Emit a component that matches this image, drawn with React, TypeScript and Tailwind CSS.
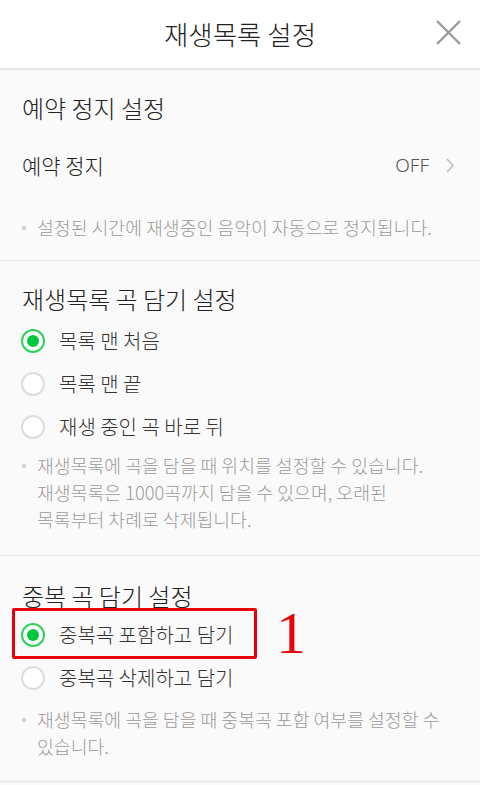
import React from "react";

const FONT = { fontFamily: '"Noto Sans CJK KR", "Noto Sans", sans-serif' };

function Radio({ checked }: { checked: boolean }) {
  return checked ? (
    <span className="flex h-[24px] w-[24px] items-center justify-center rounded-full border-2 border-[#2fd15b] bg-white">
      <span className="h-[12px] w-[12px] rounded-full bg-[#00c73c]" />
    </span>
  ) : (
    <span className="h-[24px] w-[24px] rounded-full border-2 border-[#dddddd] bg-white" />
  );
}

function RadioRow({ checked, label }: { checked: boolean; label: string }) {
  return (
    <div className="flex h-[43px] items-center pl-[21px]">
      <Radio checked={checked} />
      <span className="ml-[14px] text-[20px] font-light leading-[43px] text-[#333333]">{label}</span>
    </div>
  );
}

function Note({ lines }: { lines: string[] }) {
  return (
    <div className="flex pl-[22px] pr-[16px]">
      <span className="mt-[12px] h-[4px] w-[4px] shrink-0 rounded-full bg-[#cccccc]" />
      <div className="ml-[11px] text-[18.3px] font-light leading-[27px] text-[#9a9a9a]">
        {lines.map((l, i) => (
          <div key={i} className="whitespace-nowrap">{l}</div>
        ))}
      </div>
    </div>
  );
}

export default function App() {
  return (
    <div className="flex h-[785px] w-[480px] flex-col overflow-hidden bg-[#fafafa]" style={FONT}>
      <header className="relative flex h-[70px] shrink-0 items-center justify-center border-b-2 border-[#e6e6e6] bg-white">
        <h1 className="text-[26.5px] font-light leading-none text-[#222222]">재생목록 설정</h1>
        <svg className="absolute left-[436px] top-[20px]" width="25" height="25" viewBox="0 0 25 25">
          <path d="M1 1 L24 24 M24 1 L1 24" stroke="#9a9a9a" strokeWidth="2.4" fill="none" />
        </svg>
      </header>

      <section className="shrink-0 pb-[19px] pt-[22px]">
        <h2 className="pl-[22px] text-[24px] font-light leading-[32px] text-[#222222]">예약 정지 설정</h2>
        <div className="mt-[25px] flex h-[32px] items-center pl-[22px] pr-[26px]">
          <span className="flex-1 text-[21px] font-light leading-[32px] text-[#222222]">예약 정지</span>
          <span className="text-[19px] font-light text-[#555555]" style={{ fontFamily: '"Noto Sans", sans-serif' }}>OFF</span>
          <svg className="ml-[17px]" width="8" height="15" viewBox="0 0 8 15">
            <path d="M1 1 L7 7.5 L1 14" stroke="#bbbbbb" strokeWidth="1.5" fill="none" />
          </svg>
        </div>
        <div className="mt-[33px]">
          <Note lines={["설정된 시간에 재생중인 음악이 자동으로 정지됩니다."]} />
        </div>
      </section>
      <div className="h-px shrink-0 bg-[#e6e6e6]" />

      <section className="shrink-0 pb-[22px] pt-[22px]">
        <h2 className="pl-[22px] text-[24px] font-light leading-[32px] text-[#222222]">재생목록 곡 담기 설정</h2>
        <div className="mt-[4px]">
          <RadioRow checked label="목록 맨 처음" />
          <RadioRow checked={false} label="목록 맨 끝" />
          <RadioRow checked={false} label="재생 중인 곡 바로 뒤" />
        </div>
        <div className="mt-[4px]">
          <Note
            lines={[
              "재생목록에 곡을 담을 때 위치를 설정할 수 있습니다.",
              "재생목록은 1000곡까지 담을 수 있으며, 오래된",
              "목록부터 차례로 삭제됩니다.",
            ]}
          />
        </div>
      </section>
      <div className="h-px shrink-0 bg-[#e6e6e6]" />

      <section className="shrink-0 pb-[20px] pt-[24px]">
        <h2 className="pl-[22px] text-[24px] font-light leading-[32px] text-[#222222]">중복 곡 담기 설정</h2>
        <div className="relative mt-[1px]">
          <RadioRow checked label="중복곡 포함하고 담기" />
          <div className="absolute left-[12px] top-[-5px] h-[51px] w-[245px] rounded-[2px] border-[3px] border-[#e8000b]" />
          <span
            className="absolute left-[276px] top-[-15px] text-[60px] leading-[70px] text-[#e8000b]"
            style={{ fontFamily: '"Liberation Serif", serif' }}
          >
            1
          </span>
          <RadioRow checked={false} label="중복곡 삭제하고 담기" />
        </div>
        <div className="mt-[7px]">
          <Note lines={["재생목록에 곡을 담을 때 중복곡 포함 여부를 설정할 수", "있습니다."]} />
        </div>
      </section>
      <div className="h-[3px] shrink-0 bg-[#eeeeee]" />
    </div>
  );
}
